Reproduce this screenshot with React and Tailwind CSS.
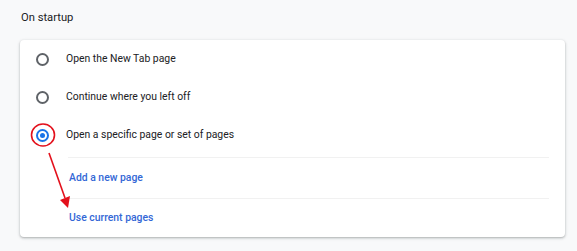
import React from 'react';

function Radio({ checked }) {
  return (
    <span
      className={`flex h-[13px] w-[13px] shrink-0 items-center justify-center rounded-full border-2 ${
        checked ? 'border-[#1a73e8]' : 'border-[#5f6368]'
      }`}
    >
      {checked && <span className="h-[5px] w-[5px] rounded-full bg-[#1a73e8]" />}
    </span>
  );
}

const options = [
  { label: 'Open the New Tab page', checked: false },
  { label: 'Continue where you left off', checked: false },
  { label: 'Open a specific page or set of pages', checked: true },
];

export default function App() {
  return (
    <div className="h-[251px] w-[577px] bg-[#f8f9fa] font-['Roboto',sans-serif] text-[10.4px] text-[#202124]">
      <div className="px-[21px] pt-[11px] pb-[15px] leading-[14px] text-[11.2px] text-[#202124]">On startup</div>
      <div className="relative mx-[20px] w-[545px] rounded-[4px] bg-white shadow-[0_1px_2px_rgba(60,64,67,0.3),0_1px_3px_1px_rgba(60,64,67,0.1)]">
        {options.map((o) => (
          <div key={o.label} className="flex h-[38px] items-center pl-[16px]">
            <Radio checked={o.checked} />
            <span className="ml-[17px]">{o.label}</span>
          </div>
        ))}
        <div className="ml-[48px] mr-[16px] mt-[3px] border-t border-[#f1f1f1]">
          <div className="flex h-[40px] items-center pl-[1px] font-medium text-[#3367d6]">Add a new page</div>
        </div>
        <div className="ml-[48px] mr-[16px] border-t border-[#f1f1f1]">
          <div className="flex h-[38px] items-center pl-[1px] font-medium text-[#3367d6]">Use current pages</div>
        </div>
        <svg className="pointer-events-none absolute left-0 top-0" width="80" height="200" viewBox="0 0 80 200">
          <ellipse cx="23" cy="95" rx="11.5" ry="11" fill="none" stroke="#e3101c" strokeWidth="1.6" />
          <line x1="29" y1="113" x2="45" y2="158" stroke="#e3101c" strokeWidth="1.6" />
          <polygon points="48,168 40,160 50,156" fill="#e3101c" />
        </svg>
      </div>
    </div>
  );
}
